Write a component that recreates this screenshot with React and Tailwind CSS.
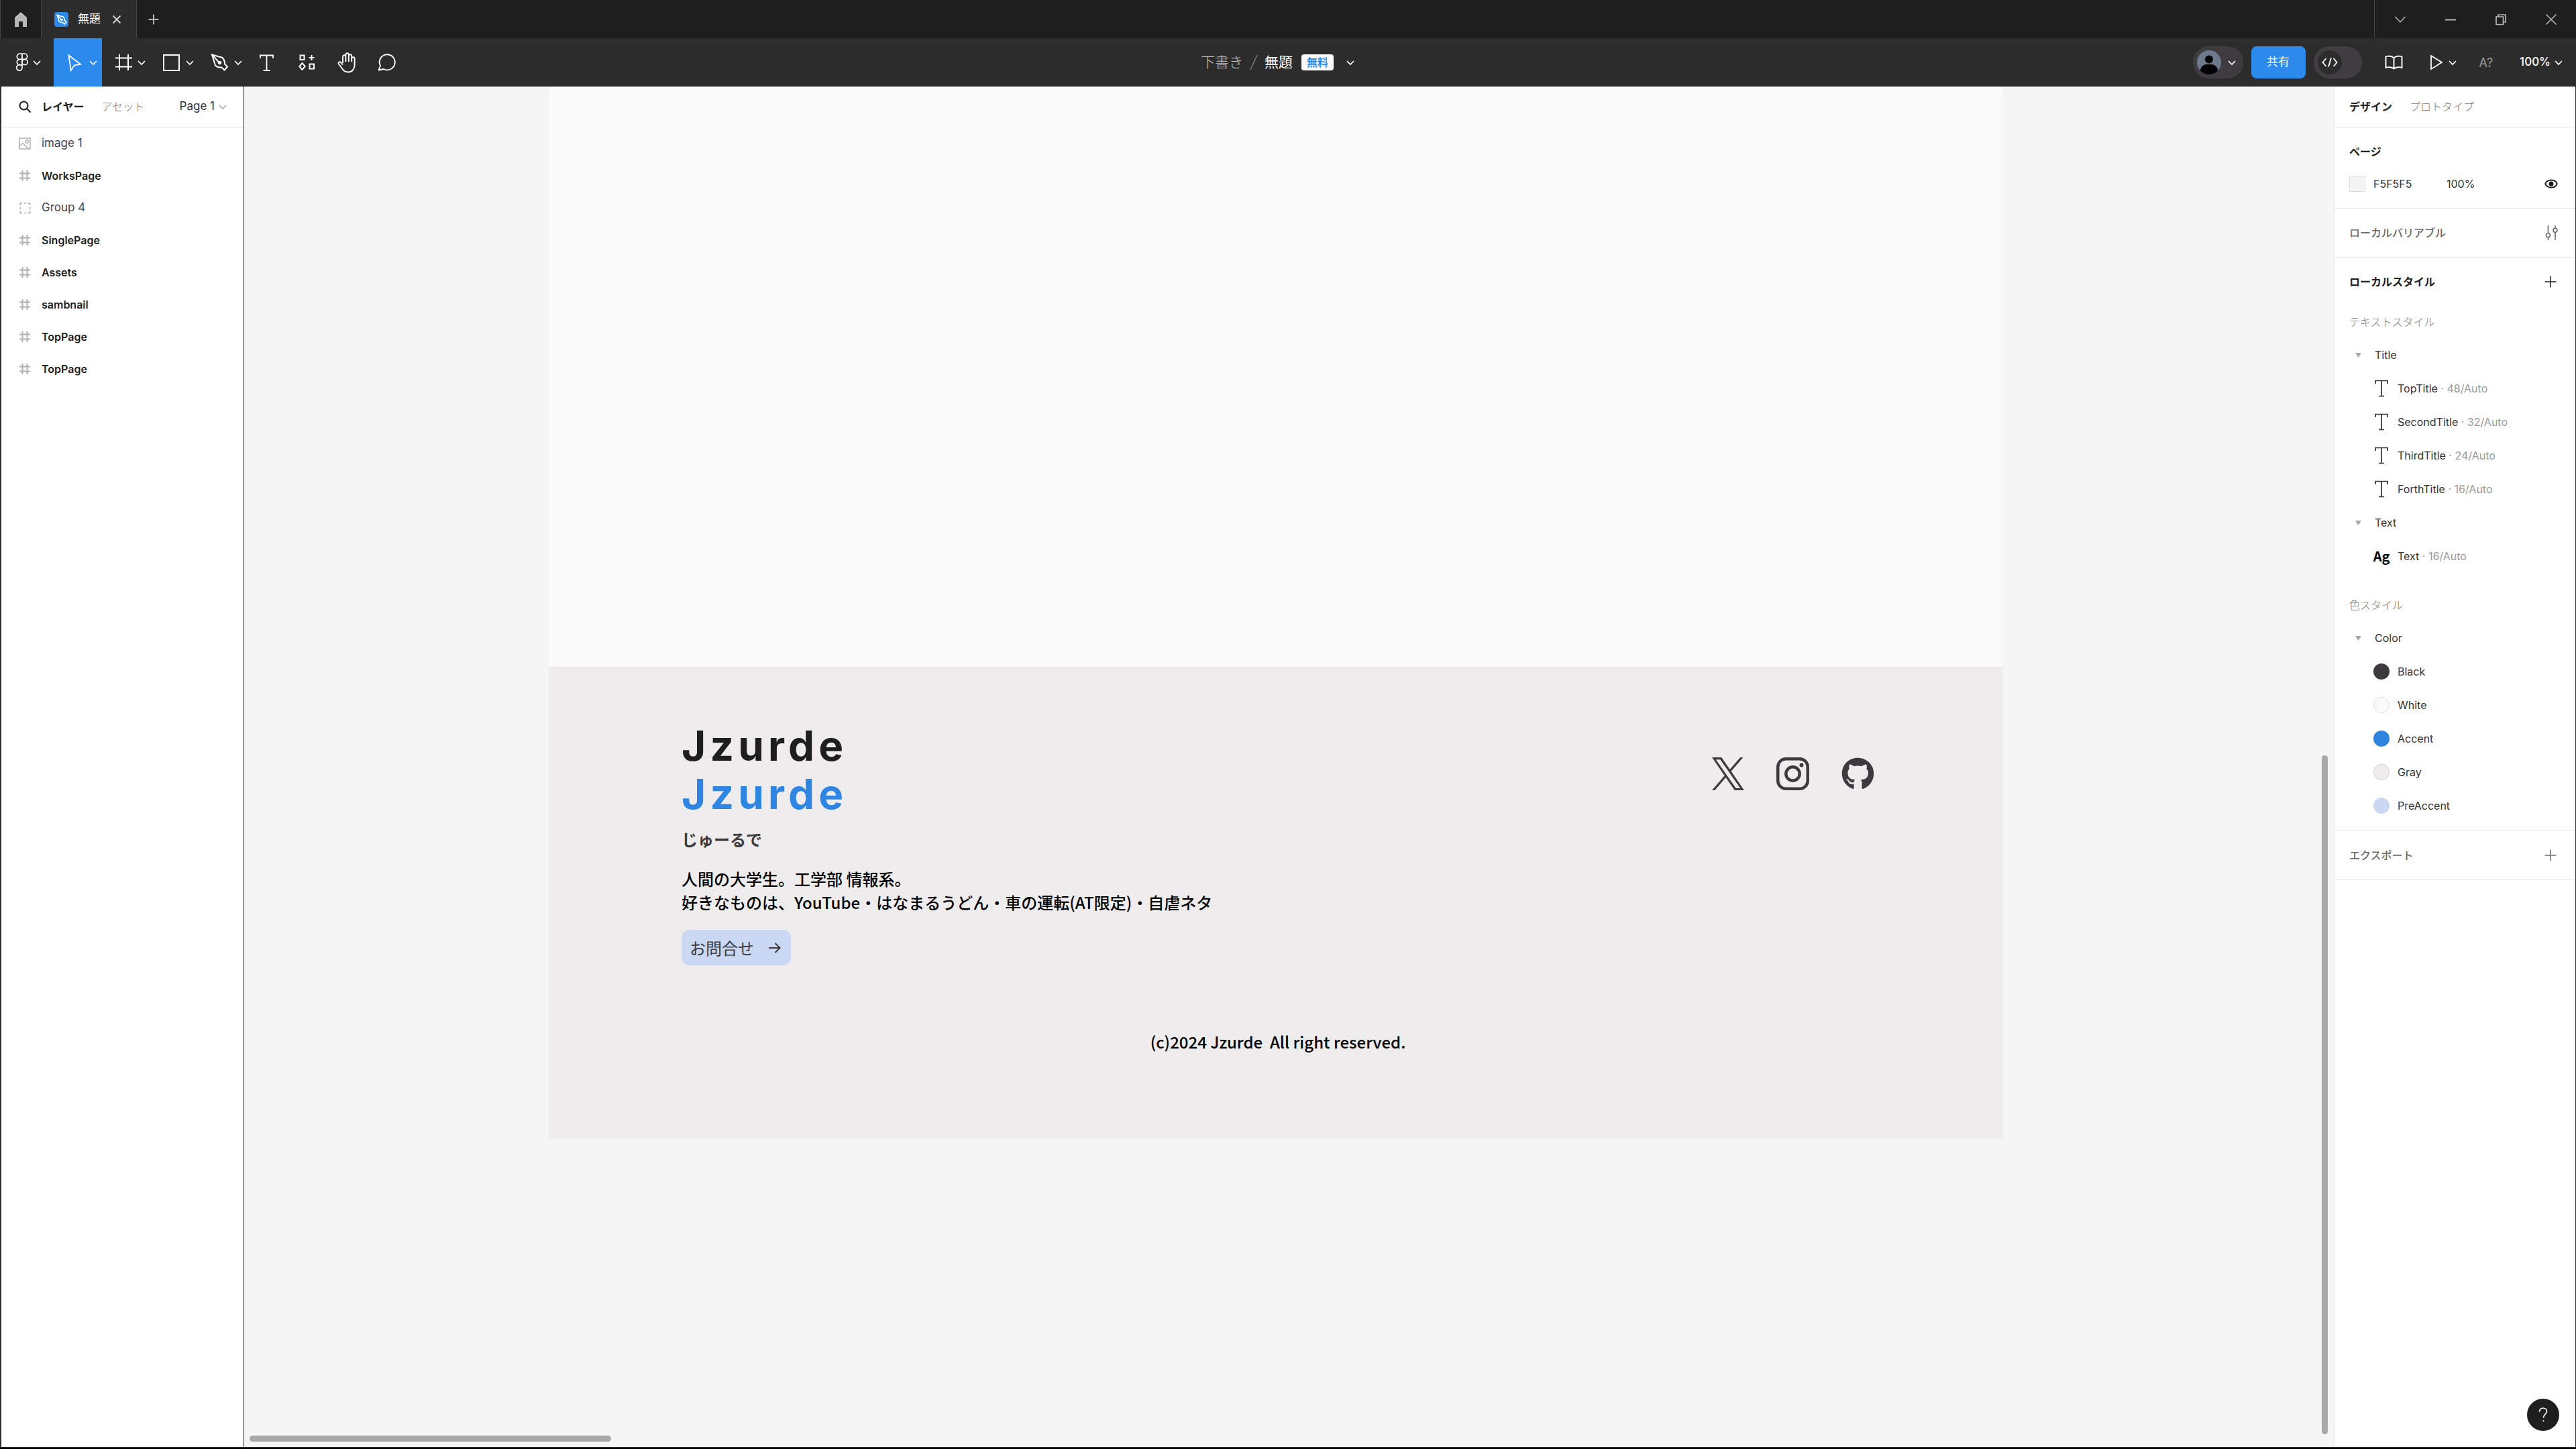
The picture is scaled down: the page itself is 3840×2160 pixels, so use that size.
import React from "react";
import { FaGithub } from "react-icons/fa6";

function Svg({ w, h, vb, className = "", sw = 2, children }) {
  return (
    <svg width={w} height={h} viewBox={vb || `0 0 ${w} ${h}`} fill="none" stroke="currentColor" strokeWidth={sw} className={`shrink-0 ${className}`} aria-hidden="true">
      {children}
    </svg>
  );
}

const Chevron = ({ className }) => (
  <Svg w={18} h={18} className={className} sw={1.7}><path d="M4 7l5 5 5-5" /></Svg>
);

const FigmaLogo = () => (
  <Svg w={24} h={28} sw={1.7}>
    <path d="M12 1H8.500a4.200 4.200 0 0 0 0 8.400H12zM12 1h3.500a4.200 4.200 0 0 1 0 8.400H12zM12 9.400H8.500a4.200 4.200 0 0 0 0 8.400H12zM12 17.800H8.500a4.200 4.200 0 1 0 3.500 4.200z" />
    <circle cx="16" cy="13.600" r="4.100" />
  </Svg>
);
const Pointer = () => (
  <Svg w={36} h={36} sw={1.8}><path d="M8.500 7.500l17.500 13.200-9.500 1.800-4.800 7.500z" strokeLinejoin="miter" /></Svg>
);
const FrameTool = () => (
  <Svg w={36} h={36}><path d="M12 6v24M25 6v24M6 11.500h25M6 24.500h25" /></Svg>
);
const RectTool = () => (
  <Svg w={36} h={36}><rect x="6" y="7" width="23" height="23" /></Svg>
);
const PenShape = () => (
  <>
    <path d="M6 6.500l15.500 4.500c2.500 3 4 6 3.500 9.500l4 4-4.500 5-4-4c-4 .5-7-.5-9.500-3z" />
    <path d="M6.500 7l9.500 10.500" />
    <circle cx="17.500" cy="18.500" r="1.800" fill="currentColor" />
  </>
);
const PenTool = () => <Svg w={36} h={36}><PenShape /></Svg>;
const TextTool = () => (
  <Svg w={36} h={36} sw={1.8}><path d="M9 12V7.500h19V12M18.500 7.500v22M13.500 30h10" /></Svg>
);
const ComponentsTool = () => (
  <Svg w={36} h={36}>
    <path d="M8.500 7.500h6v6.500h-6zM22.500 20.500h6.500v7h-6.500zM25.500 7v8M21.500 11h8M11.500 19l4.200 5-4.200 5-4.200-5z" />
  </Svg>
);
const HandTool = () => (
  <Svg w={36} h={36} sw={1.9}>
    <path d="M12 19V9.500a2.200 2.200 0 0 1 4.400 0V17M16.400 10V6.500a2.200 2.200 0 0 1 4.400 0V17M20.800 8.500a2.200 2.200 0 0 1 4.400 0V17M25.200 12.500a2.200 2.200 0 0 1 4.400 0V22c0 6-4 10.500-9.500 10.500-4 0-6.500-1.500-8.500-4.500L6 20.500c-1.500-2.200 1-4.300 3-2.500l3 3.500" strokeLinejoin="round" />
  </Svg>
);
const CommentTool = () => (
  <Svg w={36} h={36} sw={1.9}><path d="M5.500 29.500l2.500-6.500a11.500 11.500 0 1 1 5 5z" strokeLinejoin="round" /></Svg>
);

const tools = [
  { name: "移動", icon: <Pointer />, menu: true, active: true },
  { name: "フレーム", icon: <FrameTool />, menu: true },
  { name: "長方形", icon: <RectTool />, menu: true },
  { name: "ペン", icon: <PenTool />, menu: true },
  { name: "テキスト", icon: <TextTool /> },
  { name: "リソース", icon: <ComponentsTool /> },
  { name: "手のひら", icon: <HandTool /> },
  { name: "コメント", icon: <CommentTool /> },
];

function TabBar() {
  return (
    <header className="flex h-[57px] shrink-0 items-stretch bg-[#1e1e1e] text-[#b8b8b8]">
      <button aria-label="ホーム" className="flex w-[62px] items-center justify-center border-x border-[#444444]">
        <svg width="18" height="22" viewBox="0 0 18 22" fill="currentColor"><path d="M9 0l9 8v14h-6v-8H6v8H0V8z" /></svg>
      </button>
      <div className="flex w-[142px] items-center border-r border-[#444444] bg-[#2c2c2c] pl-[19px]">
        <span className="flex h-[22px] w-[21px] items-center justify-center rounded-sm bg-[#2c8aec] text-white">
          <Svg w={16} h={16} vb="4 4 27 27" sw={2.6}><PenShape /></Svg>
        </span>
        <span className="ml-[14px] text-[17px] text-white">無題</span>
        <button aria-label="タブを閉じる" className="ml-[15px] text-[#d0d0d0]">
          <Svg w={18} h={18}><path d="M3.500 3.500l11 11M14.500 3.500l-11 11" /></Svg>
        </button>
      </div>
      <button aria-label="新しいタブ" className="flex w-[50px] items-center justify-center">
        <Svg w={18} h={18}><path d="M9 1.500v15M1.500 9h15" /></Svg>
      </button>
      <div className="ml-auto flex border-l border-[#444444]">
        <button aria-label="タブ一覧" className="flex w-[75px] items-center justify-center"><Svg w={18} h={18} sw={1.5}><path d="M1.500 5L9 13l7.500-8" /></Svg></button>
        <button aria-label="最小化" className="flex w-[75px] items-center justify-center"><Svg w={18} h={18}><path d="M1 9.500h16" /></Svg></button>
        <button aria-label="元に戻す" className="flex w-[75px] items-center justify-center"><Svg w={18} h={18} sw={1.7}><path d="M2 5h10.500v11.500H2zM5 5V2h11v11h-3.500" /></Svg></button>
        <button aria-label="閉じる" className="flex w-[75px] items-center justify-center"><Svg w={18} h={18} sw={1.5}><path d="M1.500 1.500l15 15M16.500 1.500l-15 15" /></Svg></button>
      </div>
    </header>
  );
}

function Toolbar() {
  return (
    <div className="grid h-[72px] shrink-0 grid-cols-[1fr_auto_1fr] bg-[#2c2c2c] text-white">
      <div className="flex">
        <button aria-label="メインメニュー" className="flex w-[80px] items-center gap-px pl-[21px]"><FigmaLogo /><Chevron /></button>
        {tools.map((t) => (
          <button key={t.name} aria-label={t.name} className={`flex items-center ${t.menu ? "w-[72px] pl-[14px]" : "w-[60px] pl-[11px]"} ${t.active ? "bg-[#2c8aec]" : ""}`}>
            {t.icon}
            {t.menu && <Chevron />}
          </button>
        ))}
      </div>
      <div className="flex items-center pr-[28px] text-[21px]">
        <a href="#drafts" className="font-light text-[#c4c4c4]">下書き</a>
        <span className="mx-[10px] flex text-[#7a7a7a]"><Svg w={12} h={24} sw={1.5}><path d="M1 23L11 1" /></Svg></span>
        <span>無題</span>
        <span className="ml-[13px] flex h-6 w-12 items-center justify-center rounded bg-[#fafafa] text-[16px] font-bold text-[#2c8aec]">無料</span>
        <button aria-label="ファイルメニュー" className="ml-[16px]"><Chevron /></button>
      </div>
      <div className="flex items-center justify-end">
        <button aria-label="アカウント" className="flex h-12 w-[75px] items-center gap-[7px] rounded-full bg-[#3e3c3f] pl-[6px]">
          <svg width="36" height="36" viewBox="0 0 36 36">
            <clipPath id="avatar"><circle cx="18" cy="18" r="18" /></clipPath>
            <g clipPath="url(#avatar)">
              <rect width="36" height="36" fill="#6c7a8c" />
              <circle cx="18" cy="13.500" r="6" fill="#000" />
              <path d="M5 36V30c0-5 5-9 9-9h8c4 0 9 4 9 9v6z" fill="#000" />
            </g>
          </svg>
          <Chevron />
        </button>
        <button className="ml-3 h-12 w-[81px] rounded-lg bg-[#2c8aec] text-[17px]">共有</button>
        <button role="switch" aria-checked="false" aria-label="開発モード" className="ml-3 flex h-12 w-[72px] items-center rounded-full bg-[#403e42] pl-[6px]">
          <span className="flex h-9 w-9 items-center justify-center rounded-full bg-[#2c2c2c]">
            <Svg w={24} h={16} sw={1.8}><path d="M6.500 2L1.500 8l5 6M17.500 2l5 6-5 6M14 1.500l-4 13" /></Svg>
          </span>
        </button>
        <button aria-label="ライブラリ" className="ml-[34px]">
          <Svg w={27} h={22} sw={1.9}><path d="M13.500 4.500C11 1.500 5 1 1.500 2.500v16.500c3.500-1.500 9.500-1 12 1.500 2.500-2.500 8.500-3 12-1.500V2.500C22 1 16 1.500 13.500 4.500zM13.500 4.500v16" /></Svg>
        </button>
        <button aria-label="プレビュー" className="ml-[40px] flex items-center gap-[5px]">
          <Svg w={20} h={24} sw={1.8}><path d="M2 2l16 10L2 22z" /></Svg><Chevron />
        </button>
        <button className="ml-[31px] text-[18px] text-[#9a9a9a]">A?</button>
        <button className="ml-[40px] mr-[17px] flex items-center gap-[3px] text-[17px] font-medium">100%<Chevron /></button>
      </div>
    </div>
  );
}

const HashIcon = () => (
  <Svg w={18} h={18}><path d="M5.500 1v16M12.500 1v16M1 5.500h16M1 12.500h16" /></Svg>
);
const ImageIcon = () => (
  <Svg w={18} h={18} sw={1.5}><path d="M1 1h16v16H1zM1.500 12.500L6 8.500l8 8" /><circle cx="12" cy="6" r="2.300" /></Svg>
);
const GroupIcon = () => (
  <Svg w={18} h={18} sw={1.6}><path d="M2 5V2h3M7.500 2h3.500M13.500 2h3v3M16.500 7.500v3.500M16.500 13.500v3h-3M11 16.500H7.500M5 16.500H2v-3M2 11V7.500" /></Svg>
);

const layers = [
  { name: "image 1", icon: <ImageIcon /> },
  { name: "WorksPage", frame: true },
  { name: "Group 4", icon: <GroupIcon /> },
  { name: "SinglePage", frame: true },
  { name: "Assets", frame: true },
  { name: "sambnail", frame: true },
  { name: "TopPage", frame: true },
  { name: "TopPage", frame: true },
];

function LayersPanel() {
  return (
    <aside className="flex w-[362px] shrink-0 flex-col border-r border-[#2c2c2c] bg-white">
      <div className="flex h-[61px] items-center border-b border-[#e8e8e8] pl-[26px] text-[16px]">
        <button aria-label="検索"><Svg w={18} h={18}><circle cx="7.500" cy="7.500" r="6" /><path d="M12 12l5.500 5.500" /></Svg></button>
        <button className="ml-[16px] font-bold">レイヤー</button>
        <button className="ml-[26px] font-light text-[#7a7a7a]">アセット</button>
        <button className="ml-auto mr-[22px] flex items-center gap-[3px] text-[17px] text-[#333333]">Page 1<Chevron className="text-[#aaaaaa]" /></button>
      </div>
      <ul>
        {layers.map((l, i) => (
          <li key={i} className="flex h-12 items-center gap-[16px] pl-[26px] text-[#b0b0b0]">
            {l.frame ? <HashIcon /> : l.icon}
            <span className={l.frame ? "text-[16px] font-semibold text-[#1e1e1e]" : "text-[17px] text-[#3a4656]"}>{l.name}</span>
          </li>
        ))}
      </ul>
    </aside>
  );
}

const SerifT = () => (
  <Svg w={20} h={26} sw={1.7}><path d="M1 6V1.500h18V6M10 1.500v23M6 24.500h8" /></Svg>
);
const Plus = () => <Svg w={18} h={18} sw={1.5}><path d="M9 .5v17M.5 9h17" /></Svg>;

function Group({ name }) {
  return (
    <button className="flex h-[50px] w-full items-center pl-[31px]">
      <svg width="9" height="7" viewBox="0 0 9 7" fill="#a8a8a8"><path d="M0 0h9L4.500 7z" /></svg>
      <span className="ml-[20px]">{name}</span>
    </button>
  );
}

const titles = [["TopTitle", "48/Auto"], ["SecondTitle", "32/Auto"], ["ThirdTitle", "24/Auto"], ["ForthTitle", "16/Auto"]];

function TextStyle({ icon, name, meta }) {
  return (
    <li className="flex h-[50px] items-center pl-[58px]">
      <span className="flex w-6 justify-center">{icon}</span>
      <span className="ml-[12px]">{name}<span className="text-[#9a9a9a]"> · {meta}</span></span>
    </li>
  );
}

const colors = [
  ["Black", "bg-[#3c3a3c]"],
  ["White", "bg-[#fafafa] border border-[#e0e0e0]"],
  ["Accent", "bg-[#2f84de]"],
  ["Gray", "bg-[#eeecec] border border-[#cfcfcf]"],
  ["PreAccent", "bg-[#cad8f3]"],
];

function DesignPanel() {
  return (
    <aside className="flex w-[360px] shrink-0 flex-col border-l border-[#e6e6e6] bg-white text-[16px] text-[#333333]">
      <div className="flex h-[61px] items-center gap-[26px] border-b border-[#e8e8e8] pl-[22px]">
        <button className="font-bold text-[#1e1e1e]">デザイン</button>
        <button className="font-light text-[#7a7a7a]">プロトタイプ</button>
      </div>
      <section className="border-b border-[#e8e8e8] pb-6">
        <h2 className="flex h-[72px] items-center pl-[22px] font-bold text-[#1e1e1e]">ページ</h2>
        <div className="flex h-6 items-center pl-[22px] pr-[26px]">
          <span className="h-6 w-6 border border-[#e0e0e0] bg-[#f4f4f4]" />
          <span className="ml-[12px] w-[109px]">F5F5F5</span>
          <span>100%</span>
          <button aria-label="表示" className="ml-auto text-[#1e1e1e]">
            <Svg w={20} h={14}><path d="M1.200 7C4 -.3 16 -.3 18.800 7 16 14.300 4 14.300 1.200 7z" /><circle cx="10" cy="7" r="2.500" fill="currentColor" /></Svg>
          </button>
        </div>
      </section>
      <section className="flex h-[73px] items-center justify-between border-b border-[#e8e8e8] pl-[22px] pr-[26px] text-[#6a6a6a]">
        <h2 className="font-medium">ローカルバリアブル</h2>
        <button aria-label="バリアブル">
          <Svg w={19} h={22} sw={1.6}><path d="M4.500 0v11.500M4.500 18v4M15 0v4M15 10.500V22" /><circle cx="4.500" cy="14.800" r="3" /><circle cx="15" cy="7.200" r="3" /></Svg>
        </button>
      </section>
      <section className="border-b border-[#e8e8e8] pb-3">
        <div className="flex h-[72px] items-center justify-between pl-[22px] pr-[28px] text-[#1e1e1e]">
          <h2 className="font-bold">ローカルスタイル</h2>
          <button aria-label="スタイルを追加"><Plus /></button>
        </div>
        <h3 className="flex h-12 items-center pl-[22px] font-light text-[#7a7a7a]">テキストスタイル</h3>
        <Group name="Title" />
        <ul>{titles.map(([n, m]) => <TextStyle key={n} icon={<SerifT />} name={n} meta={m} />)}</ul>
        <Group name="Text" />
        <ul><TextStyle icon={<b className="font-['Noto_Sans_CJK_JP'] text-[20px] leading-6 text-black">Ag</b>} name="Text" meta="16/Auto" /></ul>
        <h3 className="mt-6 flex h-12 items-center pl-[22px] font-light text-[#7a7a7a]">色スタイル</h3>
        <Group name="Color" />
        <ul>
          {colors.map(([n, c]) => (
            <li key={n} className="flex h-[50px] items-center gap-[12px] pl-[58px]">
              <span className={`h-6 w-6 rounded-full ${c}`} />{n}
            </li>
          ))}
        </ul>
      </section>
      <section className="flex h-[73px] items-center justify-between border-b border-[#e8e8e8] pl-[22px] pr-[28px] text-[#6a6a6a]">
        <h2 className="font-medium">エクスポート</h2>
        <button aria-label="エクスポートを追加"><Plus /></button>
      </section>
      <button aria-label="ヘルプ" className="mb-[24px] ml-auto mr-[24px] mt-auto flex h-12 w-12 items-center justify-center rounded-full bg-[#1e1e1e] text-white">
        <Svg w={14} h={22} sw={1.7}><path d="M1.500 6.500C1.500 3 4 1 7 1s5.500 2 5.500 5c0 4-5 4.500-5 9v.5" /><circle cx="7.500" cy="20" r="1" fill="currentColor" stroke="none" /></Svg>
      </button>
    </aside>
  );
}

const Instagram = () => (
  <svg width="49" height="49" viewBox="0 0 49 49" fill="none" stroke="currentColor" strokeWidth="4.500" aria-hidden="true">
    <rect x="2.250" y="2.250" width="44.500" height="44.500" rx="12" />
    <circle cx="24.500" cy="24.500" r="10.200" />
    <circle cx="37.500" cy="11.500" r="3" fill="currentColor" stroke="none" />
  </svg>
);

const XLogo = () => (
  <svg width="48" height="49" viewBox="0 0 1200 1227" fill="currentColor" aria-hidden="true">
    <path d="M714.163 519.284L1160.890 0H1055.030L667.137 450.887L357.328 0H0L468.492 681.821L0 1226.370H105.866L515.491 750.218L842.672 1226.370H1200L714.137 519.284H714.163ZM569.165 687.828L521.697 619.934L144.011 79.694H306.615L611.412 515.685L658.880 583.579L1055.080 1150.300H892.476L569.165 687.854V687.828Z" />
  </svg>
);

function Canvas() {
  return (
    <main className="relative flex min-w-0 flex-1 flex-col bg-[#f5f5f5] pl-[454px] pr-[493px] font-['Noto_Sans_CJK_JP',sans-serif]">
      <div className="h-[865px] bg-[#fafafa]" />
      <footer className="flex h-[703px] flex-col bg-[#eeecec] pl-[198px] pr-[192px] pt-[82px] text-[24px] font-medium leading-[35px] text-black">
        <div className="flex items-start justify-between">
          <div>
            <p className="font-['Inter'] text-[62px] font-bold leading-[72px] tracking-widest text-[#1e1e1e]">Jzurde</p>
            <p className="font-['Inter'] text-[62px] font-bold leading-[72px] tracking-widest text-[#2f86e2]">Jzurde</p>
            <p className="mt-[13px] font-bold text-[#3c3a3c]">じゅーるで</p>
            <p className="mt-[24px]">人間の大学生。工学部 情報系。</p>
            <p>好きなものは、YouTube・はなまるうどん・車の運転(AT限定)・自虐ネタ</p>
            <button className="mt-[24px] flex h-[53px] w-[163px] items-center rounded-xl bg-[#cad8f3] pl-[12px] font-normal text-[#3c3a3c]">
              お問合せ
              <Svg w={18} h={18} className="ml-[22px]"><path d="M0 9h16M9.500 2l7 7-7 7" /></Svg>
            </button>
          </div>
          <nav className="mt-[53px] flex gap-12 text-[#3c3a3c]">
            <a href="#x" aria-label="X"><XLogo /></a>
            <a href="#instagram" aria-label="Instagram"><Instagram /></a>
            <a href="#github" aria-label="GitHub"><FaGithub size={49} /></a>
          </nav>
        </div>
        <p className="mt-[96px] text-center whitespace-pre">(c)2024 Jzurde  All right reserved.</p>
      </footer>
      <div className="absolute bottom-[19px] right-[9px] h-[1012px] w-[9px] rounded-full bg-[#a9a9a9]" />
      <div className="absolute bottom-[8px] left-[8px] h-[9px] w-[539px] rounded-full bg-[#a9a9a9]" />
    </main>
  );
}

export default function App() {
  return (
    <div className="flex h-screen flex-col border-b-2 border-black bg-[#2c2c2c] font-['Inter','Noto_Sans_CJK_JP',sans-serif] text-[#1e1e1e]">
      <TabBar />
      <Toolbar />
      <div className="flex min-h-0 flex-1 border-b border-l-2 border-r border-[#2c2c2c]">
        <LayersPanel />
        <Canvas />
        <DesignPanel />
      </div>
    </div>
  );
}
